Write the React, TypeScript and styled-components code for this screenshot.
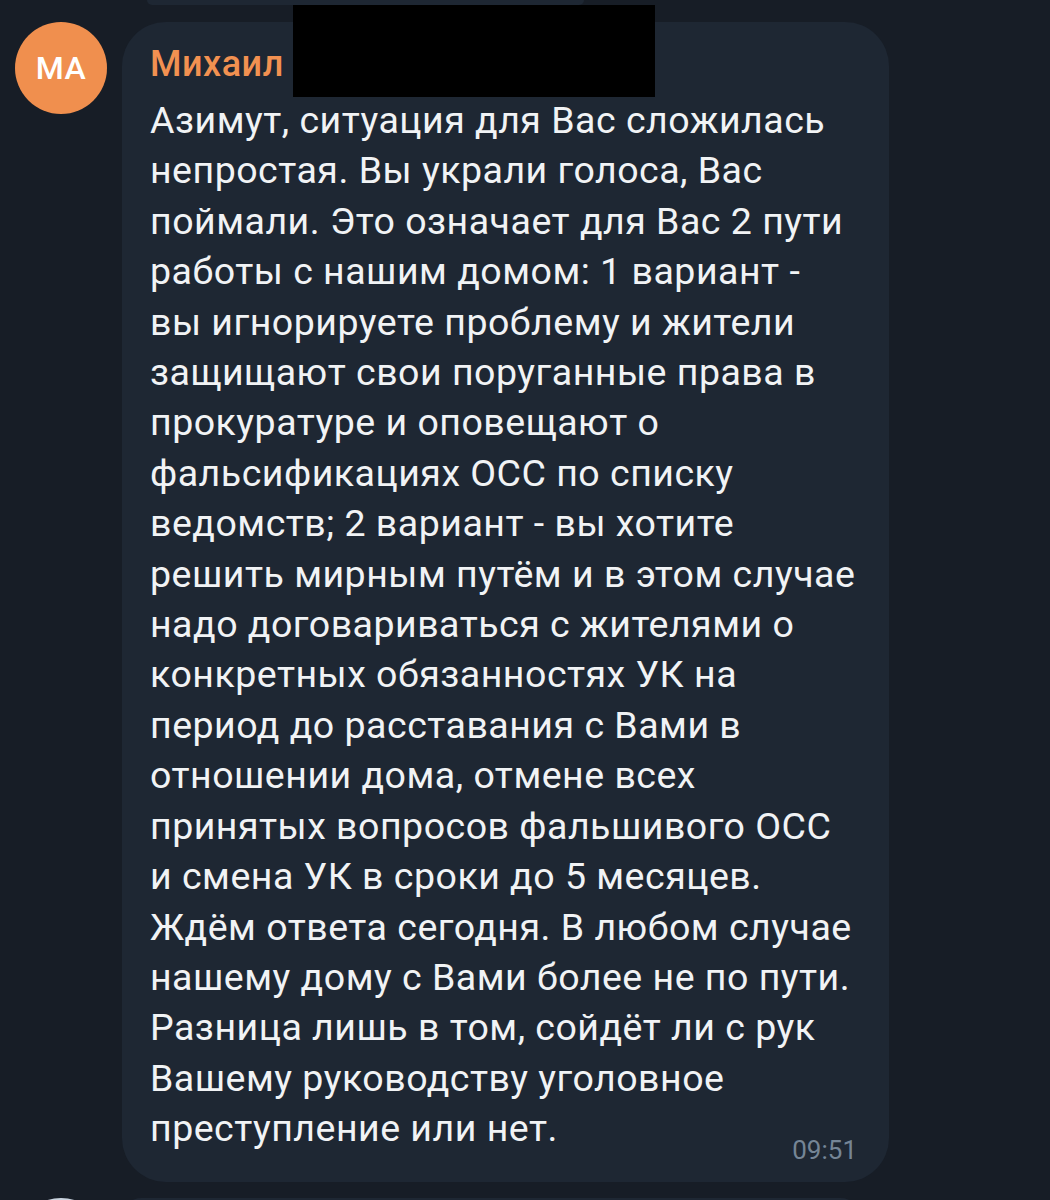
import React from "react";
import styled, { createGlobalStyle } from "styled-components";

const GlobalStyle = createGlobalStyle`
  html, body {
    margin: 0;
    padding: 0;
    background: #171d26;
    overflow: hidden;
  }
  body {
    font-family: Roboto, "Noto Sans", "Liberation Sans", sans-serif;
  }
`;

const Chat = styled.div`
  width: 1050px;
  height: 1200px;
  background: #171d26;
  display: flex;
  flex-direction: column;
  overflow: hidden;
`;

const PrevTail = styled.div`
  margin-left: 147px;
  width: 437px;
  height: 5px;
  flex-shrink: 0;
  background: #1e2733;
  border-radius: 0 0 30px 30px;
`;

const MessageRow = styled.div<{ $top: number }>`
  display: flex;
  align-items: flex-start;
  gap: 15px;
  padding-left: 15px;
  margin-top: ${(p) => p.$top}px;
  flex-shrink: 0;
`;

const Avatar = styled.div<{ $bg: string }>`
  width: 92px;
  height: 92px;
  border-radius: 50%;
  background: ${(p) => p.$bg};
  color: #fff;
  font-size: 32px;
  font-weight: 500;
  display: flex;
  align-items: center;
  justify-content: center;
  flex-shrink: 0;
  letter-spacing: 0.5px;
`;

const Bubble = styled.div<{ $width: number }>`
  position: relative;
  width: ${(p) => p.$width}px;
  box-sizing: border-box;
  background: #1e2733;
  border-radius: 44px;
  padding: 22px 32px 17px 28px;
`;

const Name = styled.div`
  color: #f29151;
  font-size: 36px;
  font-weight: 500;
  line-height: 40px;
  letter-spacing: 0.5px;
`;

const Redaction = styled.div`
  position: absolute;
  left: 171px;
  top: -17px;
  width: 362px;
  height: 92px;
  background: #000;
`;

const Body = styled.div`
  margin-top: 11px;
  color: #f1f3f5;
  font-size: 37.5px;
  line-height: 50.4px;
  letter-spacing: 0.5px;
  white-space: nowrap;
`;

const Line = styled.div``;

const Footer = styled.div`
  display: flex;
  justify-content: flex-end;
  margin-top: -19px;
`;

const Time = styled.span`
  color: #758596;
  font-size: 26px;
  line-height: 30px;
`;

const lines = [
  "Азимут, ситуация для Вас сложилась",
  "непростая. Вы украли голоса, Вас",
  "поймали. Это означает для Вас 2 пути",
  "работы с нашим домом: 1 вариант -",
  "вы игнорируете проблему и жители",
  "защищают свои поруганные права в",
  "прокуратуре и оповещают о",
  "фальсификациях ОСС по списку",
  "ведомств; 2 вариант - вы хотите",
  "решить мирным путём и в этом случае",
  "надо договариваться с жителями о",
  "конкретных обязанностях УК на",
  "период до расставания с Вами в",
  "отношении дома, отмене всех",
  "принятых вопросов фальшивого ОСС",
  "и смена УК в сроки до 5 месяцев.",
  "Ждём ответа сегодня. В любом случае",
  "нашему дому с Вами более не по пути.",
  "Разница лишь в том, сойдёт ли с рук",
  "Вашему руководству уголовное",
  "преступление или нет.",
];

export default function App() {
  return (
    <Chat>
      <GlobalStyle />
      <PrevTail />
      <MessageRow $top={17}>
        <Avatar $bg="#f08f4e">MA</Avatar>
        <Bubble $width={767}>
          <Name>Михаил</Name>
          <Redaction />
          <Body>
            {lines.map((l, i) => (
              <Line key={i}>{l}</Line>
            ))}
          </Body>
          <Footer>
            <Time>09:51</Time>
          </Footer>
        </Bubble>
      </MessageRow>
      <MessageRow $top={16}>
        <Avatar $bg="#c9d3de" />
        <Bubble $width={738} />
      </MessageRow>
    </Chat>
  );
}
